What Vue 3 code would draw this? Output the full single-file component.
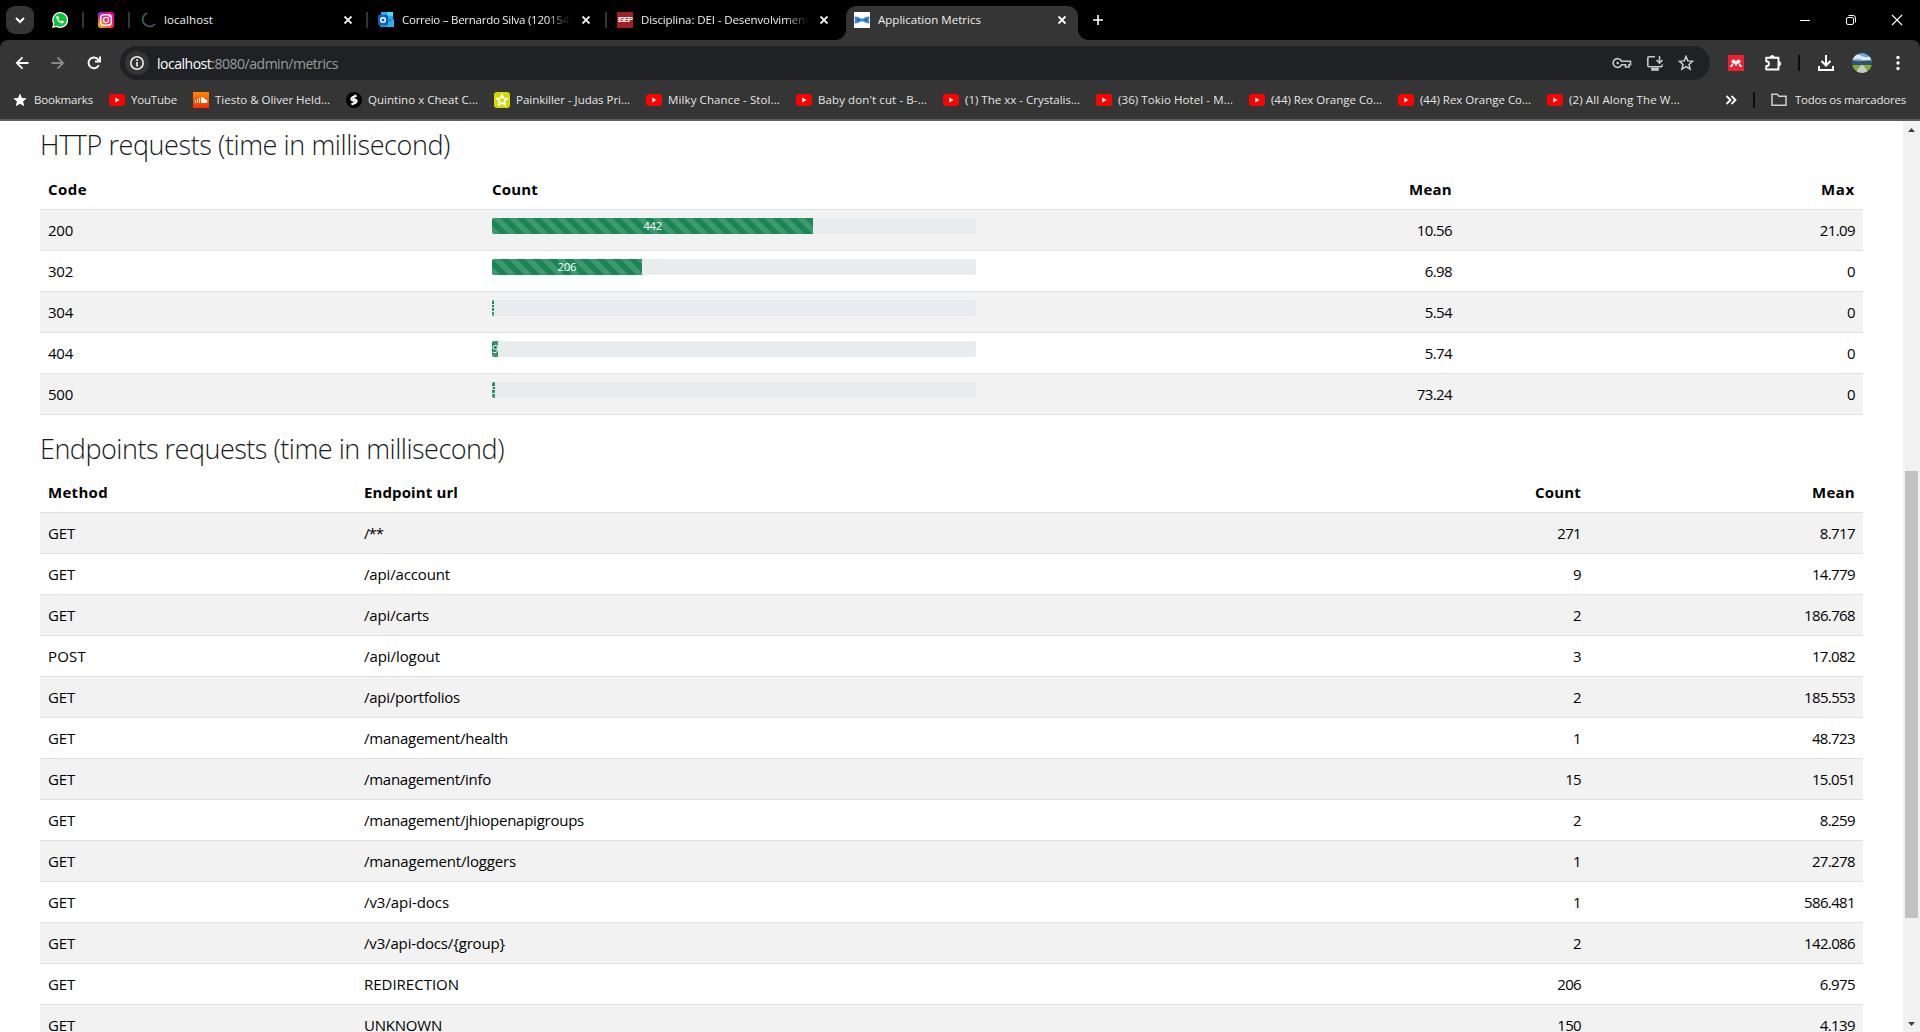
<script setup>
const vFit = {
  mounted(el, { value }) {
    if (!value) return
    const range = document.createRange()
    range.selectNodeContents(el)
    const natural = range.getBoundingClientRect().width
    el.style.letterSpacing = (value - natural) / el.textContent.length + 'px'
  },
}

const bookmarks = [
  { icon: 'star', text: 'Bookmarks', w: 59 },
  { icon: 'yt', text: 'YouTube', w: 46 },
  { icon: 'sc', text: 'Tiesto & Oliver Held...', w: 115 },
  { icon: 'shazam', text: 'Quintino x Cheat C...', w: 110 },
  { icon: 'lime', text: 'Painkiller - Judas Pri...', w: 114 },
  { icon: 'yt', text: 'Milky Chance - Stol...', w: 112 },
  { icon: 'yt', text: "Baby don't cut - B-...", w: 109 },
  { icon: 'yt', text: '(1) The xx - Crystalis...', w: 115 },
  { icon: 'yt', text: '(36) Tokio Hotel - M...', w: 115 },
  { icon: 'yt', text: '(44) Rex Orange Co...', w: 111 },
  { icon: 'yt', text: '(44) Rex Orange Co...', w: 111 },
  { icon: 'yt', text: '(2) All Along The W...', w: 111 },
]

const codes = [
  { code: '200', count: 442, pct: 66.35, mean: '10.56', max: '21.09' },
  { code: '302', count: 206, pct: 30.93, mean: '6.98', max: '0' },
  { code: '304', count: 3, pct: 0.45, mean: '5.54', max: '0' },
  { code: '404', count: 9, pct: 1.3, mean: '5.74', max: '0' },
  { code: '500', count: 5, pct: 0.65, mean: '73.24', max: '0' },
]

const endpoints = [
  ['GET', '/**', '271', '8.717', 19],
  ['GET', '/api/account', '9', '14.779', 86],
  ['GET', '/api/carts', '2', '186.768', 65],
  ['POST', '/api/logout', '3', '17.082', 76],
  ['GET', '/api/portfolios', '2', '185.553', 96],
  ['GET', '/management/health', '1', '48.723', 144],
  ['GET', '/management/info', '15', '15.051', 127],
  ['GET', '/management/jhiopenapigroups', '2', '8.259', 220],
  ['GET', '/management/loggers', '1', '27.278', 152],
  ['GET', '/v3/api-docs', '1', '586.481', 85],
  ['GET', '/v3/api-docs/{group}', '2', '142.086', 141],
  ['GET', 'REDIRECTION', '206', '6.975', 95],
  ['GET', 'UNKNOWN', '150', '4.139', 78],
]

const numWidth = (s) => [...s].reduce((t, c) => t + (c === '.' ? 3.6 : 7.9), 0)
</script>

<template>
  <div class="window">
    <header class="tabstrip">
      <div class="search-tabs">
        <svg width="28" height="28"><path d="M10 12l4 4 4-4" fill="none" stroke="#fff" stroke-width="2" /></svg>
      </div>
      <div class="pinned wa">
        <svg width="16" height="16" viewBox="0 0 16 16">
          <path d="M0 16l1.2-4.2A8 8 0 1 1 4.200 14.900z" fill="#fff" />
          <path d="M1.500 14.500l.9-3.100A6.700 6.700 0 1 1 4.700 13.700z" fill="#10c13a" />
          <path d="M5.400 4c-.5 0-1.400.7-1.100 2.100.5 2.600 3 5 5.600 5.300 1.200.1 2-.7 2-1.600 0-.5-1.500-1.200-1.900-1.200-.4.100-.6.900-1 .9C8 9.200 6.700 8 6.400 7.100c0-.4.600-.7.600-1.100C7 5.600 6.200 4 5.400 4z" fill="#fff" />
        </svg>
      </div>
      <i class="sep"></i>
      <div class="pinned ig">
        <svg width="16" height="16" viewBox="0 0 16 16">
          <defs>
            <linearGradient id="igBase" x1="0" y1="1" x2="1" y2="0">
              <stop offset="0" stop-color="#ffc31a" /><stop offset=".3" stop-color="#ff6a1c" />
              <stop offset=".6" stop-color="#ff0a6c" /><stop offset="1" stop-color="#e800b4" />
            </linearGradient>
            <radialGradient id="igTop" cx="0" cy="0" r=".7">
              <stop offset="0" stop-color="#6a1cff" /><stop offset="1" stop-color="#d800c8" stop-opacity="0" />
            </radialGradient>
          </defs>
          <rect width="16" height="16" rx="3" fill="url(#igBase)" /><rect width="16" height="16" rx="3" fill="url(#igTop)" />
          <rect x="2.700" y="2.700" width="10.600" height="10.600" rx="3" fill="none" stroke="#fff" stroke-width="1.400" />
          <circle cx="8" cy="8" r="2.600" fill="none" stroke="#fff" stroke-width="1.400" /><circle cx="11.200" cy="4.800" r=".8" fill="#fff" />
        </svg>
      </div>
      <i class="sep"></i>
      <div class="tab t1">
        <svg class="fav" width="16" height="16"><path d="M7 1A7 7 0 1 0 15 12" fill="none" stroke="#46606a" stroke-width="1.600" /></svg>
        <span class="label"><span v-fit="49">localhost</span></span>
        <svg class="x" width="10" height="10"><path d="M1.500 1.500l7 7m0-7l-7 7" stroke="#e8e8e8" stroke-width="1.800" /></svg>
      </div>
      <i class="sep"></i>
      <div class="tab t2">
        <svg class="fav" width="16" height="16">
          <path d="M3 0h12v7H3z" fill="#28a8ea" /><path d="M9 0h6v4H9z" fill="#50d9ff" />
          <path d="M2 7h14v8H2z" fill="#1490df" /><path d="M10 11l6-4v8H8z" fill="#28b4f0" />
          <rect y="3" width="10" height="10" rx="1" fill="#0f5fbc" />
          <circle cx="5" cy="8" r="2.300" fill="none" stroke="#fff" stroke-width="1.500" />
        </svg>
        <span class="label fade"><span v-fit="167">Correio – Bernardo Silva (120154</span></span>
        <svg class="x" width="10" height="10"><path d="M1.500 1.500l7 7m0-7l-7 7" stroke="#e8e8e8" stroke-width="1.800" /></svg>
      </div>
      <i class="sep"></i>
      <div class="tab t3">
        <span class="fav isep"><b v-fit="14">ISEP</b></span>
        <span class="label fade"><span v-fit="168">Disciplina: DEI - Desenvolviment</span></span>
        <svg class="x" width="10" height="10"><path d="M1.500 1.500l7 7m0-7l-7 7" stroke="#e8e8e8" stroke-width="1.800" /></svg>
      </div>
      <div class="tab active">
        <svg class="fav" width="16" height="16">
          <rect width="16" height="16" fill="#fff" />
          <path d="M.5 4.500Q4 4 6.800 6.600h2.400Q12 4 15.500 4.500q-1 3.500 0 7Q12 11.500 9.200 9.400H6.800Q4 11.500.5 11.500q1-3.500 0-7z" fill="#3e8acc" />
          <path d="M3 6.500l3.500 1.500L3 9.500zM13 6.500L9.500 8 13 9.500z" fill="#1d5f9b" />
        </svg>
        <span class="label"><span v-fit="103">Application Metrics</span></span>
        <svg class="x" width="10" height="10"><path d="M1.500 1.500l7 7m0-7l-7 7" stroke="#fff" stroke-width="1.800" /></svg>
      </div>
      <svg class="plus" width="12" height="12"><path d="M6 1v10M1 6h10" stroke="#fff" stroke-width="1.600" /></svg>
      <div class="controls">
        <svg width="12" height="12"><path d="M1 6.500h10" stroke="#fff" /></svg>
        <svg width="12" height="12" fill="none" stroke="#fff"><rect x="1.500" y="3.500" width="7" height="7" rx="1.500" /><path d="M3.500 1.500H8Q10.500 1.500 10.500 4v4.500" /></svg>
        <svg width="12" height="12"><path d="M1 1l10 10M11 1L1 11" stroke="#fff" stroke-width="1.100" /></svg>
      </div>
    </header>

    <div class="chrome">
      <div class="toolbar">
        <div class="nav">
          <svg width="14" height="14" fill="none" stroke="#fff" stroke-width="1.800"><path d="M13.500 7H2M7.500 1.300L1.800 7l5.700 5.700" /></svg>
          <svg width="14" height="14" fill="none" stroke="#8a8a8a" stroke-width="1.800"><path d="M.5 7H12M6.500 1.300L12.200 7l-5.700 5.700" /></svg>
          <svg width="14" height="14" fill="none" stroke="#fff" stroke-width="1.900"><path d="M11.800 9.200A5.400 5.400 0 1 1 11.200 3.500L12.500 5M13 .5v5H8" /></svg>
        </div>
        <div class="omnibox">
          <span class="info">
            <svg width="16" height="16" fill="none" stroke="#eee"><circle cx="8" cy="8" r="6.200" stroke-width="1.600" /><path d="M8 7v4.500M8 4.300v1.600" stroke-width="1.700" /></svg>
          </span>
          <span class="url" v-fit="181"><em>localhost</em>:8080/admin/metrics</span>
          <span class="actions">
            <svg width="20" height="16" fill="none" stroke="#c7c7c7" stroke-width="1.600"><path d="M9.500 6.200H18.500V9.800H17V12H13.500V9.800H9.500A4.400 4.400 0 1 1 9.500 6.200z" /><circle cx="5.700" cy="8" r="1.300" fill="#c7c7c7" stroke="none" /></svg>
            <svg width="18" height="16" fill="none" stroke="#c7c7c7" stroke-width="1.600"><path d="M9 1.800H3Q1.800 1.800 1.800 3v7.500Q1.800 11.700 3 11.700H15Q16.200 11.700 16.200 10.500V9.500M13.500 1v6.500M10.500 5l3 3 3-3" /><path d="M6 13.500h6v1.500H6z" fill="#c7c7c7" /></svg>
            <svg width="16" height="16" viewBox="0 0 16 16" fill="none" stroke="#d0d0d0" stroke-width="1.500"><path d="M8 1.500l1.800 4.400 4.800.4-3.600 3.100 1.100 4.700L8 11.600l-4.100 2.500L5 9.400 1.400 6.300l4.800-.4z" /></svg>
          </span>
        </div>
        <div class="ext">
          <svg width="16" height="16"><rect width="16" height="16" fill="#f0202f" /><path d="M2 11.200h1.200Q4.600 11 4.600 8.800M14 11.200h-1.200Q11.400 11 11.400 8.800M8 9v2" fill="none" stroke="#fff" stroke-width="1.700" /><circle cx="5.600" cy="6.600" r="2.100" fill="#fff" /><circle cx="10.400" cy="6.600" r="2.100" fill="#fff" /><circle cx="8" cy="8.300" r="1.300" fill="#fff" /></svg>
          <svg width="18" height="18" fill="none" stroke="#fff" stroke-width="1.900"><path d="M2.200 3.800h12.300v11.700H2.200V12.200Q5 12 5 9.700T2.200 7.200z" stroke-linejoin="round" /><path d="M6.300 3.500a2 2 0 0 1 4 0zM14.800 7.700a2 2 0 0 1 0 4z" fill="#fff" stroke-width="1" /></svg>
          <i class="bar"></i>
          <svg width="16" height="16" fill="none" stroke="#fff" stroke-width="2"><path d="M8 0v10M3.500 6L8 10.500 12.500 6M1 11v4h14v-4" /></svg>
          <svg width="20" height="20" viewBox="0 0 20 20">
            <defs><clipPath id="av"><circle cx="10" cy="10" r="10" /></clipPath></defs>
            <g clip-path="url(#av)"><path d="M0 0h20v11H0z" fill="#6ea6d4" /><path d="M0 3q5-3 10 0t10-1v4q-6 3-10 1T0 7z" fill="#dce8ef" /><path d="M0 7q5 2 10 1t10 0v4H0z" fill="#2f526e" /><path d="M0 12h20v8H0z" fill="#7fae2c" /><path d="M9 12h2l6 8H3z" fill="#c9c9c4" /></g>
          </svg>
          <svg width="4" height="16" fill="#fff"><circle cx="2" cy="2.500" r="1.700" /><circle cx="2" cy="8" r="1.700" /><circle cx="2" cy="13.500" r="1.700" /></svg>
        </div>
      </div>

      <nav class="bookmarks">
        <div v-for="(b, i) in bookmarks" :key="i" class="bm" :class="b.icon">
          <svg v-if="b.icon === 'star'" width="14" height="14" viewBox="0 0 14 14"><path d="M7 .5l1.900 4.400 4.800.4-3.600 3.200 1.100 4.700L7 10.700l-4.200 2.500 1.100-4.700L.3 5.300l4.800-.4z" fill="#fff" /></svg>
          <svg v-else-if="b.icon === 'yt'" width="16" height="16"><rect y="2" width="16" height="12" rx="3" fill="#f00" /><path d="M6.300 5.500v5L10.500 8z" fill="#fff" /></svg>
          <svg v-else-if="b.icon === 'sc'" width="16" height="16"><defs><linearGradient id="scg" x2="0" y2="1"><stop stop-color="#ff8a00" /><stop offset="1" stop-color="#ff2a00" /></linearGradient></defs><rect width="16" height="16" fill="url(#scg)" /><path d="M2.500 8.500V11M4.500 7v4M6.500 6v5" stroke="#fff" /><path d="M8 5.500q3-1 3.700 2 2.800-.3 2.800 1.800 0 1.700-1.700 1.700H8z" fill="#fff" /></svg>
          <svg v-else-if="b.icon === 'shazam'" width="16" height="16"><circle cx="8" cy="8" r="8" fill="#000" /><path d="M10.500 3.500L6.300 5.500Q4.500 7 6.300 8.200L9 9M5.500 12.500l4.200-2Q11.500 9 9.700 7.800L7 7" fill="none" stroke="#fff" stroke-width="2.200" /></svg>
          <svg v-else width="16" height="16"><rect width="16" height="16" rx="3" fill="#d3d900" /><path d="M8 3l1.500 3.300 3.500.4-2.600 2.400.7 3.600L8 11l-3.100 1.700.7-3.600L3 6.700l3.500-.4z" fill="none" stroke="#fff" stroke-width="1.700" /></svg>
          <span class="bmt" :style="{ width: b.w + 'px' }"><span v-fit="b.w">{{ b.text }}</span></span>
        </div>
        <div class="all">
          <svg width="12" height="10" fill="none" stroke="#fff" stroke-width="1.800"><path d="M1.500 1l4 4-4 4M6.500 1l4 4-4 4" /></svg>
          <i class="bar"></i>
          <svg width="16" height="14" fill="none" stroke="#d0d0d0" stroke-width="1.500"><path d="M1 1.500V12.200H15V3.200H8L6.300 1.300H1z" /></svg>
          <span class="bmt" v-fit="111">Todos os marcadores</span>
        </div>
      </nav>
    </div>

    <div class="page">
      <main class="content">
        <h3><span v-fit="410">HTTP requests (time in millisecond)</span></h3>
        <div class="table http">
          <div class="row head">
            <div><span v-fit="39">Code</span></div><div><span v-fit="46">Count</span></div>
            <div class="r"><span v-fit="43">Mean</span></div><div class="r"><span v-fit="34">Max</span></div>
          </div>
          <div v-for="c in codes" :key="c.code" class="row">
            <div><span v-fit="25">{{ c.code }}</span></div>
            <div><div class="progress"><div class="fill" :style="{ width: c.pct + '%' }"><span>{{ c.count }}</span></div></div></div>
            <div class="r"><span v-fit="numWidth(c.mean)">{{ c.mean }}</span></div>
            <div class="r"><span v-fit="numWidth(c.max)">{{ c.max }}</span></div>
          </div>
        </div>
        <h3 class="second"><span v-fit="464">Endpoints requests (time in millisecond)</span></h3>
        <div class="table ep">
          <div class="row head">
            <div><span v-fit="60">Method</span></div><div><span v-fit="94">Endpoint url</span></div>
            <div class="r"><span v-fit="46">Count</span></div><div class="r"><span v-fit="43">Mean</span></div>
          </div>
          <div v-for="e in endpoints" :key="e[1]" class="row">
            <div><span v-fit="e[0] === 'GET' ? 27 : 38">{{ e[0] }}</span></div>
            <div><span v-fit="e[4]">{{ e[1] }}</span></div>
            <div class="r"><span v-fit="numWidth(e[2])">{{ e[2] }}</span></div>
            <div class="r"><span v-fit="numWidth(e[3])">{{ e[3] }}</span></div>
          </div>
        </div>
      </main>
      <aside class="scroll">
        <svg width="17" height="17"><path d="M5 11h7L8.500 7z" fill="#404040" /></svg>
        <div class="track"><div class="thumb"></div></div>
        <svg width="17" height="17"><path d="M5 7h7l-3.500 4z" fill="#404040" /></svg>
      </aside>
    </div>
  </div>
</template>

<style>
body { overflow: hidden; }
</style>

<style scoped>
* { box-sizing: border-box; }
svg { display: block; flex: none; }
.window { width: 1920px; height: 1032px; overflow: hidden; display: flex; flex-direction: column; background: #fff; font-family: "Open Sans", "Noto Sans", sans-serif; }
.tabstrip { height: 40px; background: #000; display: flex; align-items: center; flex: none; }
.search-tabs { width: 28px; height: 28px; margin-left: 6px; border-radius: 9px; background: #353535; }
.pinned { width: 16px; }
.wa { margin: 0 14px 0 18px; }
.ig { margin: 0 14px; }
.sep { width: 2px; height: 16px; background: #353535; flex: none; }
.tab { display: flex; align-items: center; height: 100%; color: #f1f1f1; font-size: 11.5px; flex: none; }
.t1 { width: 236px; padding: 0 13px 0 10px; }
.t2 { width: 237px; padding: 0 14px 0 10px; }
.t3 { width: 239px; padding: 0 17px 0 10px; }
.active { position: relative; width: 232px; height: 34px; align-self: flex-end; background: #353535; border-radius: 10px 10px 0 0; padding: 0 11px 6px 8px; }
.active::before, .active::after { content: ""; position: absolute; bottom: 0; width: 10px; height: 10px; }
.active::before { left: -10px; background: radial-gradient(circle at 0 0, #000 9.500px, #353535 10px); }
.active::after { right: -10px; background: radial-gradient(circle at 100% 0, #000 9.500px, #353535 10px); }
.fav { width: 16px; height: 16px; flex: none; }
.label { flex: 1; margin: 0 11px 0 8px; padding-bottom: 1px; white-space: nowrap; overflow: hidden; }
.fade { -webkit-mask-image: linear-gradient(90deg, #000 86%, transparent); mask-image: linear-gradient(90deg, #000 86%, transparent); }
.isep { background: #a51d25; color: #fff; font: bold 8px/16px "Liberation Sans", sans-serif; padding-left: 1px; overflow: hidden; }
.plus { margin-left: 14px; }
.controls { margin-left: auto; margin-right: 17px; display: flex; gap: 34px; }
.chrome { flex: none; height: 81px; background: linear-gradient(#353535, #353535) 0 10px / 100% 100% no-repeat, #000; }
.toolbar { height: 46px; background: #353535; border-radius: 8px 8px 0 0; display: flex; align-items: center; }
.nav { display: flex; gap: 22px; margin-left: 15px; }
.omnibox { margin-left: 19px; width: 1590px; height: 34px; border-radius: 17px; background: #202124; display: flex; align-items: center; }
.info { width: 24px; height: 24px; border-radius: 50%; background: #353535; margin: 0 8px 0 5px; display: flex; align-items: center; justify-content: center; }
.url { font-size: 14px; color: #9b9c9e; white-space: nowrap; }
.url em { font-style: normal; color: #fff; }
.actions { margin-left: auto; margin-right: 16px; display: flex; gap: 14px; align-items: center; }
.ext { display: flex; align-items: center; margin-left: 18px; }
.ext > :nth-child(2) { margin-left: 20px; }
.bar { width: 2px; height: 16px; background: #0c0c0c; }
.ext .bar { margin: 0 18px 0 16px; }
.ext > :nth-child(5) { margin: 0 24px 0 18px; }
.bookmarks { height: 35px; border-bottom: 2px solid #5d5d5f; background: #353535; display: flex; align-items: center; padding: 0 14px 5px 13px; color: #e6e6e6; font-size: 11.5px; }
.bm { display: flex; align-items: center; gap: 6px; margin-right: 16px; }
.bm.star { gap: 7px; }
.bmt { white-space: nowrap; line-height: 16px; padding-bottom: 1px; }
.all { margin-left: auto; display: flex; align-items: center; }
.all .bar { margin: 0 16px; }
.all .bmt { margin-left: 8px; }
.page { flex: 1; min-height: 0; display: flex; overflow: hidden; }
.content { flex: 1; padding: 0 40px; overflow: hidden; }
h3 { margin: 0; height: 48px; padding-top: 7px; font-size: 27px; line-height: 34px; font-weight: 300; color: #16191c; white-space: nowrap; }
h3.second { height: 57px; padding-top: 17px; }
.row { display: grid; height: 41px; border-bottom: 1px solid #dee2e6; font-size: 15px; line-height: 24px; color: #000; }
.http .row { grid-template-columns: 444px 500px 476px 403px; }
.ep .row { grid-template-columns: 316px 901px 332px 274px; }
.row > div { padding: 8px; white-space: nowrap; }
.row:nth-child(even) { background: #f2f2f2; }
.head { font-weight: 700; }
.r { text-align: right; }
.progress { height: 16px; border-radius: 2px; background: #e9ecef; overflow: hidden; }
.fill { height: 16px; display: flex; justify-content: center; overflow: hidden; color: #fff; font-size: 11.500px; line-height: 16px; letter-spacing: -0.4px; background-color: #198754; background-image: linear-gradient(45deg, rgba(255,255,255,.15) 25%, transparent 25%, transparent 50%, rgba(255,255,255,.15) 50%, rgba(255,255,255,.15) 75%, transparent 75%, transparent); background-size: 16px 16px; }
.scroll { width: 17px; background: #f1f1f1; display: flex; flex-direction: column; }
.track { flex: 1; padding: 333px 2px 0; }
.thumb { height: 447px; background: #c1c1c1; }
</style>
